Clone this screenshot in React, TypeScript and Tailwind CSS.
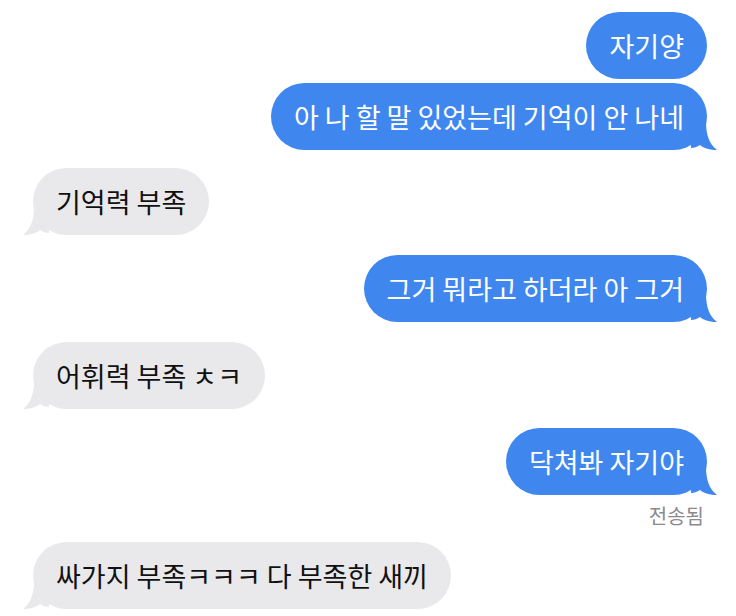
import React from "react";

const font = { fontFamily: '"Noto Sans CJK KR", "Noto Sans", sans-serif' };

function Tail({ color, side }: { color: string; side: "left" | "right" }) {
  return (
    <svg
      width="26"
      height="28"
      viewBox="0 0 26 28"
      className={side === "right" ? "absolute -right-[10px] bottom-0" : "absolute -left-[10px] bottom-0 -scale-x-100"}
    >
      <path d="M0 0 H15 C15 12 18 22 26 28 C19 28 13 26.5 9 23 C6 25 3 26 0 26 Z" fill={color} />
    </svg>
  );
}

function Bubble({ text, me, tail = true }: { text: string; me?: boolean; tail?: boolean }) {
  const color = me ? "#3f87ef" : "#e9e9eb";
  return (
    <div
      className={
        "relative h-[67px] rounded-[34px] px-[23px] flex items-center text-[27px] leading-none " +
        (me ? "bg-[#3f87ef] text-white" : "bg-[#e9e9eb] text-[#111111]")
      }
    >
      {tail && <Tail color={color} side={me ? "right" : "left"} />}
      <span className="relative whitespace-nowrap">{text}</span>
    </div>
  );
}

export default function App() {
  return (
    <div className="w-[736px] h-[616px] bg-white overflow-hidden flex flex-col pl-[33px] pr-[29px] pt-[12px]" style={font}>
      <div className="flex flex-col items-end gap-[4px]">
        <Bubble text="자기양" me tail={false} />
        <Bubble text="아 나 할 말 있었는데 기억이 안 나네" me />
      </div>
      <div className="flex flex-col items-start mt-[18px]">
        <Bubble text="기억력 부족" />
      </div>
      <div className="flex flex-col items-end mt-[20px]">
        <Bubble text="그거 뭐라고 하더라 아 그거" me />
      </div>
      <div className="flex flex-col items-start mt-[20px]">
        <Bubble text="어휘력 부족 ㅊㅋ" />
      </div>
      <div className="flex flex-col items-end mt-[19px]">
        <Bubble text="닥쳐봐 자기야" me />
        <div className="mt-[11px] mr-[3px] text-[20px] leading-none text-[#8a8a8e]">전송됨</div>
      </div>
      <div className="flex flex-col items-start mt-[16px]">
        <Bubble text="싸가지 부족ㅋㅋㅋ 다 부족한 새끼" />
      </div>
    </div>
  );
}
